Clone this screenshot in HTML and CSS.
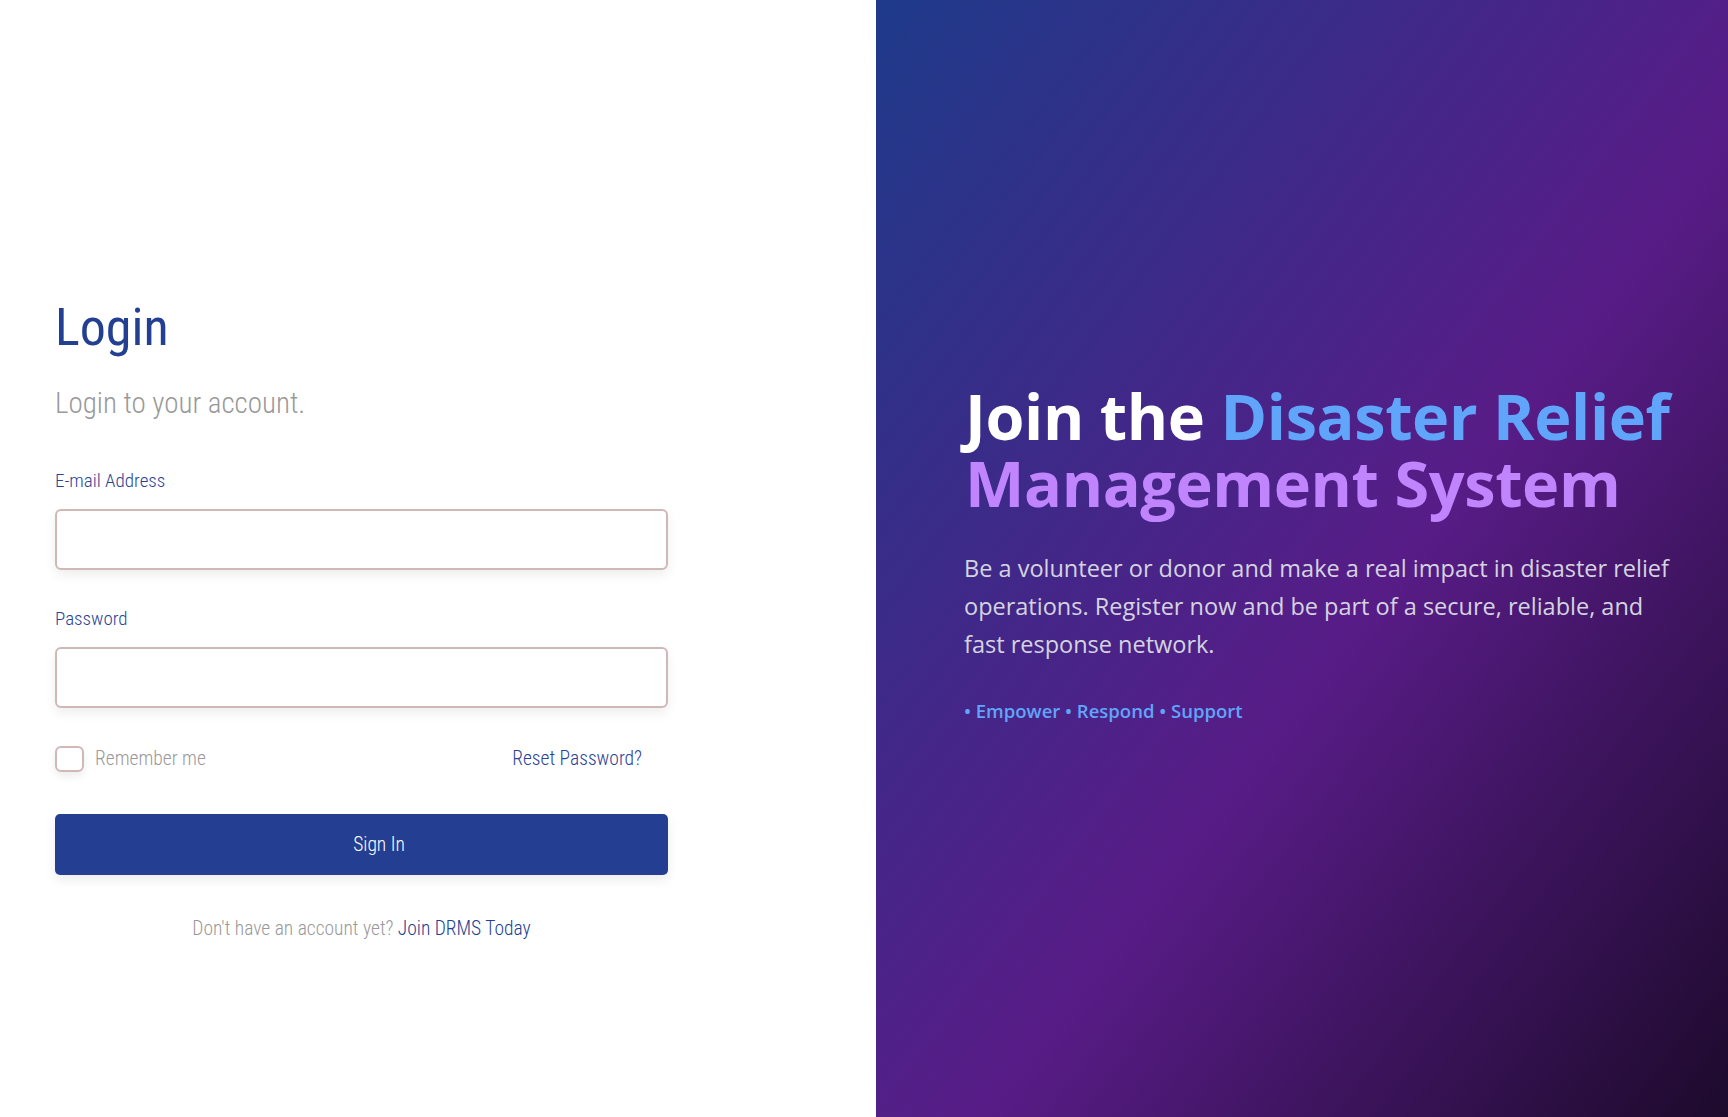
FILE: index.html
```html
<!DOCTYPE html>
<html lang="en">
<head>
<meta charset="utf-8">
<title>Login - DRMS</title>
<link rel="stylesheet" href="styles.css">
</head>
<body>
<main class="page">
  <section class="auth">
    <div class="auth-inner">
      <h1 class="auth-title">Login</h1>
      <p class="auth-sub">Login to your account.</p>
      <form class="form">
        <label class="field-label" for="email">E-mail Address</label>
        <input class="field-input" id="email" type="email">
        <label class="field-label pw-label" for="password">Password</label>
        <input class="field-input" id="password" type="password">
        <div class="form-row">
          <label class="remember">
            <span class="check"></span>
            <span class="remember-text">Remember me</span>
          </label>
          <a class="reset" href="#">Reset Password?</a>
        </div>
        <button class="btn" type="button">Sign In</button>
        <p class="signup">Don't have an account yet? <a class="signup-link" href="#">Join DRMS Today</a></p>
      </form>
    </div>
  </section>
  <section class="hero">
    <div class="hero-inner">
      <h2 class="hero-title">Join the <span class="hl-blue">Disaster Relief</span> <span class="hl-purple">Management System</span></h2>
      <p class="hero-text">Be a volunteer or donor and make a real impact in disaster relief operations. Register now and be part of a secure, reliable, and fast response network.</p>
      <p class="hero-tags">• Empower • Respond • Support</p>
    </div>
  </section>
</main>
</body>
</html>
```
FILE: styles.css
```css
* { box-sizing: border-box; }
html, body { margin: 0; padding: 0; }
body {
  width: 1728px;
  height: 1117px;
  overflow: hidden;
  background: #ffffff;
}
.page {
  display: grid;
  grid-template-columns: 876px 1fr;
  height: 1117px;
}

/* ---------- left: login ---------- */
.auth {
  font-family: "Roboto", "Open Sans", sans-serif;
  font-stretch: 75%;
  background: #ffffff;
  padding: 293px 0 0 55px;
}
.auth-inner { width: 613px; }
.auth-title {
  margin: 0;
  font-size: 52px;
  line-height: 70px;
  font-weight: 400;
  color: #233f92;
}
.auth-sub {
  margin: 23px 0 0;
  font-size: 29px;
  line-height: 34px;
  font-weight: 300;
  color: #999999;
}
.form {
  display: flex;
  flex-direction: column;
  margin-top: 49px;
}
.field-label {
  font-size: 19px;
  line-height: 24px;
  font-weight: 300;
  color: #2b4395;
  margin-bottom: 16px;
}
.pw-label { margin-top: 37px; margin-bottom: 16px; }
.field-input {
  height: 61px;
  width: 100%;
  border: 2px solid #d0b8b8;
  border-radius: 6px;
  background: #fff;
  box-shadow: 0 5px 12px rgba(0, 0, 0, 0.07);
  outline: none;
  font: inherit;
  font-size: 19px;
  padding: 0 16px;
}
.form-row {
  display: flex;
  align-items: center;
  justify-content: space-between;
  margin-top: 38px;
  padding-right: 26px;
  height: 26px;
}
.remember {
  display: flex;
  align-items: center;
  gap: 11px;
}
.check {
  width: 29px;
  height: 26px;
  border: 2px solid #d0b8b8;
  border-radius: 6px;
  background: #fff;
  box-shadow: 0 4px 8px rgba(0, 0, 0, 0.08);
}
.remember-text {
  font-size: 19.5px;
  line-height: 24px;
  font-weight: 300;
  color: #999999;
}
.reset {
  font-size: 19.5px;
  line-height: 24px;
  font-weight: 300;
  color: #2b4395;
  text-decoration: none;
}
.btn {
  margin-top: 42px;
  height: 61px;
  width: 100%;
  border: 0;
  border-radius: 5px;
  background: #243e92;
  color: #ffffff;
  font-family: inherit;
  font-stretch: 75%;
  font-size: 19.5px;
  font-weight: 300;
  padding: 0 0 0 35px;
  box-shadow: 0 5px 12px rgba(0, 0, 0, 0.08);
  cursor: pointer;
}
.signup {
  margin: 42px 0 0;
  text-align: center;
  font-size: 19.5px;
  line-height: 24px;
  font-weight: 300;
  color: #999999;
}
.signup-link {
  color: #233f92;
  font-weight: 300;
  text-decoration: none;
}

/* ---------- right: hero ---------- */
.hero {
  font-family: "Open Sans", "Noto Sans", sans-serif;
  background: linear-gradient(to bottom right, #1e3a8a 0%, #581c87 56%, #1d0a2c 100%);
  display: flex;
  flex-direction: column;
  justify-content: center;
  padding: 0 40px 12px 88px;
}
.hero-inner { width: 724px; }
.hero-title {
  margin: 0;
  font-size: 63px;
  line-height: 67px;
  font-weight: 700;
  color: #ffffff;
  letter-spacing: -0.4px;
  padding-left: 1px;
}
.hl-blue { color: #60a5fa; }
.hl-purple { color: #c084fc; }
.hero-text {
  margin: 33px 0 0;
  font-size: 23.5px;
  line-height: 38px;
  font-weight: 400;
  color: #d4d4e0;
}
.hero-tags {
  margin: 36px 0 0;
  font-size: 18.5px;
  line-height: 24px;
  font-weight: 600;
  color: #60a5fa;
}
```
